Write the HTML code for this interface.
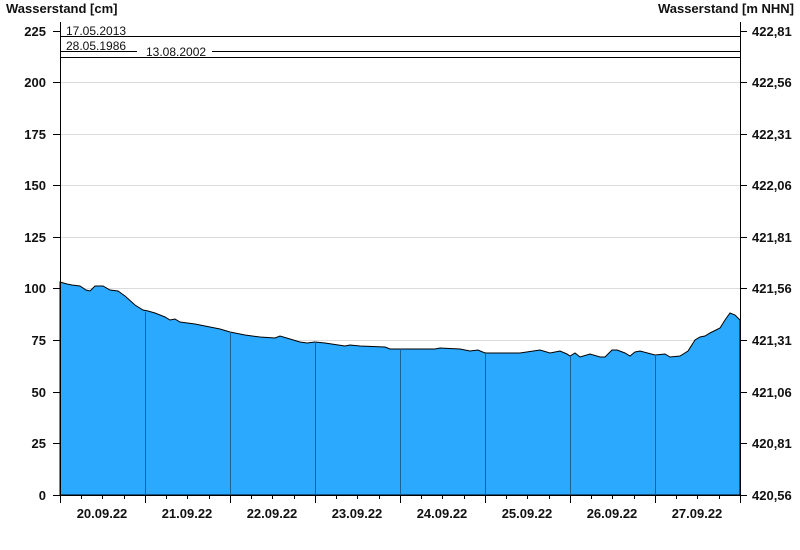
<!DOCTYPE html>
<html><head><meta charset="utf-8"><style>
html,body{margin:0;padding:0;background:#fff;width:800px;height:550px;overflow:hidden}
svg{display:block}
text{font-family:"Liberation Sans",Arial,sans-serif;font-size:13px;font-weight:bold;fill:#111}
.s{font-weight:normal;font-size:12px}
</style></head><body>
<svg width="800" height="550" viewBox="0 0 800 550" xmlns="http://www.w3.org/2000/svg">
<text x="6" y="13">Wasserstand [cm]</text>
<text x="794" y="13" text-anchor="end">Wasserstand [m NHN]</text>
<g stroke="#dcdcdc" stroke-width="1">
<line x1="60" y1="82.5" x2="740" y2="82.5"/><line x1="60" y1="134.5" x2="740" y2="134.5"/>
<line x1="60" y1="185.5" x2="740" y2="185.5"/><line x1="60" y1="237.5" x2="740" y2="237.5"/>
<line x1="60" y1="288.5" x2="740" y2="288.5"/><line x1="60" y1="340.5" x2="740" y2="340.5"/>
<line x1="60" y1="392.5" x2="740" y2="392.5"/><line x1="60" y1="443.5" x2="740" y2="443.5"/>
</g>
<polygon fill="#2aa9ff" stroke="#000" stroke-width="1" points="60,495 60,282 67,284 72,285 80,286 86,290 90,291 95,286 103,286 110,290 118,291 125,296 135,305 143,310 148,311 155,313 165,317 170,320 175,319 180,322 195,324 210,327 220,329 230,332 245,335 260,337 275,338 280,336 290,339 300,342 307,343 315,342 325,343 345,346 350,345 360,346 385,347 390,349 400,349 435,349 440,348 460,349 470,351 478,350 485,353 500,353 520,353 540,350 550,353 560,351 567,354 570,356 575,353 580,357 590,354 600,357 605,357 612,350 617,350 625,353 630,356 635,352 640,351 655,355 665,354 670,357 680,356 688,351 695,340 700,337 705,336 710,333 720,328 725,320 730,313 735,315 740,320 740,495"/>
<g stroke="#1a6296" stroke-width="1">
<line x1="145.5" y1="312" x2="145.5" y2="495"/><line x1="230.5" y1="332" x2="230.5" y2="495"/>
<line x1="315.5" y1="342" x2="315.5" y2="495"/><line x1="400.5" y1="349" x2="400.5" y2="495"/>
<line x1="485.5" y1="352" x2="485.5" y2="495"/><line x1="570.5" y1="356" x2="570.5" y2="495"/>
<line x1="655.5" y1="355" x2="655.5" y2="495"/>
</g>
<g stroke="#000" stroke-width="1">
<line x1="60.5" y1="22" x2="60.5" y2="495"/><line x1="740.5" y1="22" x2="740.5" y2="495"/>
<line x1="53" y1="495.5" x2="740" y2="495.5"/>
<line x1="60" y1="36.5" x2="740" y2="36.5"/>
<line x1="60" y1="51.5" x2="137" y2="51.5"/><line x1="212" y1="51.5" x2="740" y2="51.5"/>
<line x1="60" y1="57.5" x2="740" y2="57.5"/>
<line x1="53" y1="31.5" x2="60" y2="31.5"/><line x1="53" y1="82.5" x2="60" y2="82.5"/><line x1="53" y1="134.5" x2="60" y2="134.5"/><line x1="53" y1="185.5" x2="60" y2="185.5"/><line x1="53" y1="237.5" x2="60" y2="237.5"/><line x1="53" y1="288.5" x2="60" y2="288.5"/><line x1="53" y1="340.5" x2="60" y2="340.5"/><line x1="53" y1="392.5" x2="60" y2="392.5"/><line x1="53" y1="443.5" x2="60" y2="443.5"/>
<line x1="740" y1="31.5" x2="747" y2="31.5"/><line x1="740" y1="82.5" x2="747" y2="82.5"/><line x1="740" y1="134.5" x2="747" y2="134.5"/><line x1="740" y1="185.5" x2="747" y2="185.5"/><line x1="740" y1="237.5" x2="747" y2="237.5"/><line x1="740" y1="288.5" x2="747" y2="288.5"/><line x1="740" y1="340.5" x2="747" y2="340.5"/><line x1="740" y1="392.5" x2="747" y2="392.5"/><line x1="740" y1="443.5" x2="747" y2="443.5"/><line x1="740" y1="495.5" x2="747" y2="495.5"/>
<path d="M60.5 495v8M145.5 495v8M230.5 495v8M315.5 495v8M400.5 495v8M485.5 495v8M570.5 495v8M655.5 495v8M740.5 495v8"/>
<path d="M81.5 495v4M102.5 495v4M124.5 495v4M166.5 495v4M187.5 495v4M209.5 495v4M251.5 495v4M272.5 495v4M294.5 495v4M336.5 495v4M357.5 495v4M379.5 495v4M421.5 495v4M442.5 495v4M464.5 495v4M506.5 495v4M527.5 495v4M549.5 495v4M591.5 495v4M612.5 495v4M634.5 495v4M676.5 495v4M697.5 495v4M719.5 495v4"/>
</g>
<rect x="64" y="27" width="64" height="9" fill="#fff"/>
<text class="s" x="66" y="35">17.05.2013</text>
<text class="s" x="66" y="50">28.05.1986</text>
<rect x="142" y="46" width="70" height="10" fill="#fff"/>
<text class="s" x="146" y="56">13.08.2002</text>
<g text-anchor="end">
<text x="46" y="36">225</text><text x="46" y="87">200</text><text x="46" y="139">175</text><text x="46" y="190">150</text><text x="46" y="242">125</text><text x="46" y="293">100</text><text x="46" y="345">75</text><text x="46" y="397">50</text><text x="46" y="448">25</text><text x="46" y="500">0</text>
</g>
<g>
<text x="752" y="36">422,81</text><text x="752" y="87">422,56</text><text x="752" y="139">422,31</text><text x="752" y="190">422,06</text><text x="752" y="242">421,81</text><text x="752" y="293">421,56</text><text x="752" y="345">421,31</text><text x="752" y="397">421,06</text><text x="752" y="448">420,81</text><text x="752" y="500">420,56</text>
</g>
<g text-anchor="middle">
<text x="102" y="518">20.09.22</text><text x="187" y="518">21.09.22</text><text x="272" y="518">22.09.22</text><text x="357" y="518">23.09.22</text><text x="442" y="518">24.09.22</text><text x="527" y="518">25.09.22</text><text x="612" y="518">26.09.22</text><text x="697" y="518">27.09.22</text>
</g>
</svg>
</body></html>
